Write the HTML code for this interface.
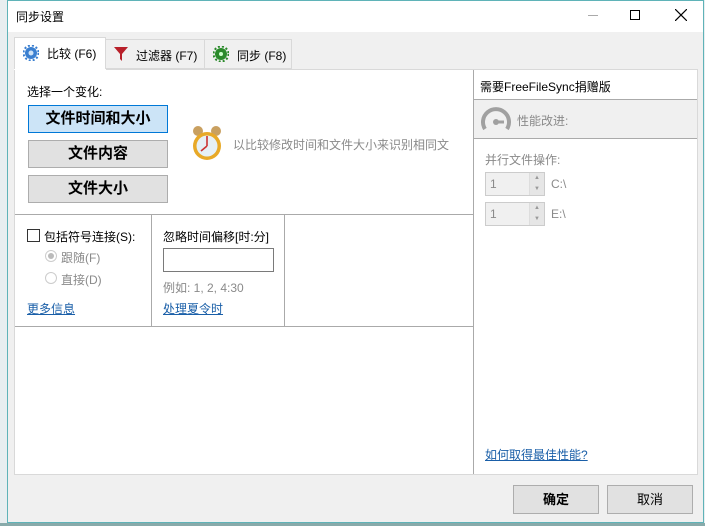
<!DOCTYPE html>
<html><head><meta charset="utf-8"><style>
*{margin:0;padding:0;box-sizing:border-box}
body{width:705px;height:526px;overflow:hidden;background:#e8eef0;font-family:"Liberation Sans","Noto Sans CJK SC",sans-serif;font-size:12px;color:#000;position:relative}
.a{position:absolute}
.win{left:7px;top:0;width:697px;height:523px;border:1px solid #5fb3b8;background:#f0f0f0}
.lnk{color:#1a5fa8;text-decoration:underline}
.gray{color:#8a8a8a}
.btn{border:1px solid #adadad;background:#e1e1e1;text-align:center;font-weight:bold;font-size:15px}
</style></head><body>
<div class="a" style="left:0;top:523px;width:705px;height:3px;background:#8aa"></div>
<div class="a win"></div>
<div class="a" style="left:8px;top:1px;width:695px;height:31px;background:#fff"></div>
<div class="a" style="left:16px;top:8px;font-size:12px">同步设置</div>
<div class="a" style="left:588px;top:15px;width:10px;height:1px;background:#aaa"></div>
<div class="a" style="left:630px;top:10px;width:10px;height:10px;border:1px solid #000"></div>
<svg class="a" style="left:675px;top:9px" width="12" height="12"><path d="M0 0L12 12M12 0L0 12" stroke="#000" stroke-width="1.2"/></svg>
<!-- tabs -->
<div class="a" style="left:14px;top:37px;width:92px;height:33px;background:#fff;border:1px solid #d9d9d9;border-bottom:none"></div>
<div class="a" style="left:105px;top:39px;width:100px;height:30px;background:#f0f0f0;border:1px solid #d9d9d9"></div>
<div class="a" style="left:204px;top:39px;width:88px;height:30px;background:#f0f0f0;border:1px solid #d9d9d9"></div>
<svg class="a" style="left:23px;top:45px" width="16" height="16"><circle cx="8" cy="8" r="6" fill="#3a7fd0"/><circle cx="8" cy="8" r="7.5" fill="none" stroke="#3a7fd0" stroke-width="2" stroke-dasharray="2 2"/><circle cx="8" cy="8" r="2.5" fill="#cfe3f7"/></svg>
<div class="a" style="left:47px;top:45px">比较 (F6)</div>
<svg class="a" style="left:113px;top:46px" width="16" height="16"><path d="M1 1H15L9 8V15L7 13V8Z" fill="#b8202a"/></svg>
<div class="a" style="left:136px;top:47px">过滤器 (F7)</div>
<svg class="a" style="left:213px;top:46px" width="16" height="16"><circle cx="8" cy="8" r="6" fill="#2a8a2a"/><circle cx="8" cy="8" r="7.5" fill="none" stroke="#2a8a2a" stroke-width="2" stroke-dasharray="2 2"/><circle cx="8" cy="8" r="2" fill="#cfc"/></svg>
<div class="a" style="left:237px;top:47px">同步 (F8)</div>
<!-- panel -->
<div class="a" style="left:14px;top:69px;width:684px;height:406px;background:#fff;border:1px solid #d9d9d9;border-top:none"></div>
<div class="a" style="left:14px;top:69px;width:92px;height:1px;background:#fff"></div>
<div class="a" style="left:106px;top:69px;width:592px;height:1px;background:#d9d9d9"></div>
<div class="a" style="left:27px;top:83px">选择一个变化:</div>
<div class="a btn" style="left:28px;top:105px;width:140px;height:28px;background:#cce4f7;border-color:#0078d7;line-height:26px">文件时间和大小</div>
<div class="a btn" style="left:28px;top:140px;width:140px;height:28px;line-height:26px">文件内容</div>
<div class="a btn" style="left:28px;top:175px;width:140px;height:28px;line-height:26px">文件大小</div>
<svg class="a" style="left:190px;top:124px" width="34" height="38"><circle cx="8" cy="7" r="5" fill="#c9a060"/><circle cx="26" cy="7" r="5" fill="#c9a060"/><circle cx="17" cy="22" r="14" fill="#e8a928"/><circle cx="17" cy="22" r="10.5" fill="#e6f0f6"/><path d="M17 22V12M17 22L11 27" stroke="#c33" stroke-width="1.6"/></svg>
<div class="a gray" style="left:233px;top:136px">以比较修改时间和文件大小来识别相同文</div>
<div class="a" style="left:15px;top:214px;width:458px;height:1px;background:#aaa"></div>
<div class="a" style="left:15px;top:326px;width:458px;height:1px;background:#aaa"></div>
<div class="a" style="left:151px;top:215px;width:1px;height:111px;background:#aaa"></div>
<div class="a" style="left:284px;top:215px;width:1px;height:111px;background:#aaa"></div>
<div class="a" style="left:27px;top:229px;width:13px;height:13px;border:1px solid #333"></div>
<div class="a" style="left:44px;top:228px">包括符号连接(S):</div>
<div class="a" style="left:45px;top:250px;width:12px;height:12px;border:1px solid #ccc;border-radius:50%"><div style="margin:2px;width:6px;height:6px;border-radius:50%;background:#bbb"></div></div>
<div class="a gray" style="left:61px;top:249px">跟随(F)</div>
<div class="a" style="left:45px;top:272px;width:12px;height:12px;border:1px solid #ccc;border-radius:50%"></div>
<div class="a gray" style="left:61px;top:271px">直接(D)</div>
<div class="a lnk" style="left:27px;top:300px">更多信息</div>
<div class="a" style="left:163px;top:228px">忽略时间偏移[时:分]</div>
<div class="a" style="left:163px;top:248px;width:111px;height:24px;border:1px solid #7a7a7a"></div>
<div class="a gray" style="left:163px;top:279px">例如: 1, 2, 4:30</div>
<div class="a lnk" style="left:163px;top:300px">处理夏令时</div>
<!-- right -->
<div class="a" style="left:473px;top:70px;width:1px;height:404px;background:#aaa"></div>
<div class="a" style="left:474px;top:70px;width:223px;height:1px;background:#fff"></div>
<div class="a" style="left:480px;top:78px">需要FreeFileSync捐赠版</div>
<div class="a" style="left:474px;top:99px;width:223px;height:40px;background:#f0f0f0;border-top:1px solid #aaa;border-bottom:1px solid #aaa"></div>
<svg class="a" style="left:480px;top:106px" width="32" height="26"><path d="M5 23A13 13 0 1 1 27 23" fill="none" stroke="#a0a0a0" stroke-width="4"/><path d="M16 16H24" stroke="#a0a0a0" stroke-width="3"/><circle cx="16" cy="16" r="3" fill="#a0a0a0"/></svg>
<div class="a gray" style="left:517px;top:112px">性能改进:</div>
<div class="a gray" style="left:485px;top:151px">并行文件操作:</div>
<div class="a" style="left:485px;top:172px;width:60px;height:24px;border:1px solid #ccc;background:#f0f0f0"></div>
<div class="a gray" style="left:490px;top:177px">1</div>
<div class="a" style="left:529px;top:173px;width:15px;height:22px;border-left:1px solid #ddd;background:#e6e6e6;font-size:6px;color:#999;text-align:center;line-height:11px">▲<br>▼</div>
<div class="a gray" style="left:551px;top:177px">C:\</div>
<div class="a" style="left:485px;top:202px;width:60px;height:24px;border:1px solid #ccc;background:#f0f0f0"></div>
<div class="a gray" style="left:490px;top:207px">1</div>
<div class="a" style="left:529px;top:203px;width:15px;height:22px;border-left:1px solid #ddd;background:#e6e6e6;font-size:6px;color:#999;text-align:center;line-height:11px">▲<br>▼</div>
<div class="a gray" style="left:551px;top:207px">E:\</div>
<div class="a lnk" style="left:485px;top:446px">如何取得最佳性能?</div>
<!-- buttons -->
<div class="a btn" style="left:513px;top:485px;width:86px;height:29px;font-size:13px;line-height:27px">确定</div>
<div class="a btn" style="left:607px;top:485px;width:86px;height:29px;font-size:13px;font-weight:normal;line-height:27px">取消</div>
</body></html>
